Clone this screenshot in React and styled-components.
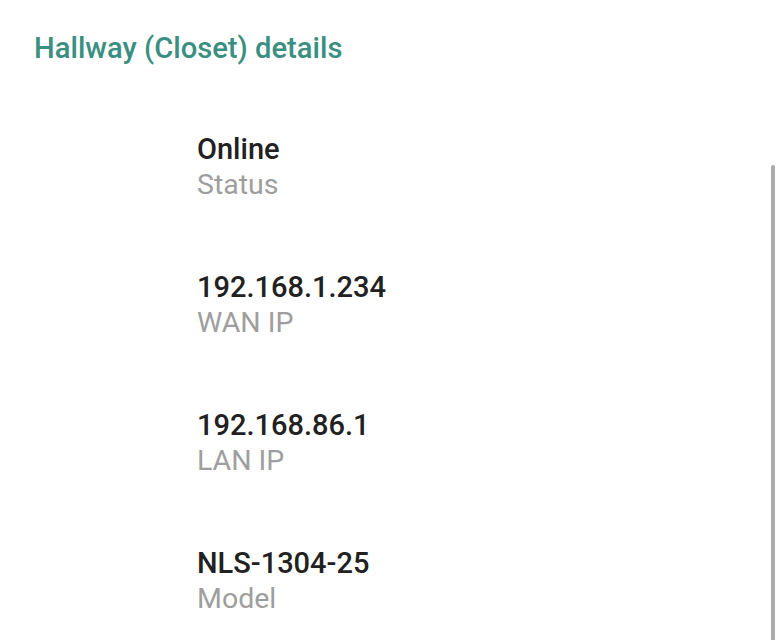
import React from "react"
import styled, { createGlobalStyle } from "styled-components"

const GlobalStyle = createGlobalStyle`
  html, body {
    margin: 0;
    padding: 0;
    background: #ffffff;
    font-family: Roboto, "Noto Sans", sans-serif;
  }
`

const Screen = styled.div`
  position: relative;
  width: 782px;
  height: 640px;
  overflow: hidden;
  background: #ffffff;
`

const Title = styled.h2`
  margin: 0;
  padding: 31px 0 0 34px;
  font-size: 29.2px;
  font-weight: 500;
  line-height: 34px;
  color: #3a8f81;
`

const DetailList = styled.div`
  display: flex;
  flex-direction: column;
  gap: 68px;
  padding: 67px 0 0 197px;
`

const Detail = styled.div`
  display: flex;
  flex-direction: column;
`

const Value = styled.span`
  font-size: 29px;
  font-weight: 500;
  line-height: 35px;
  color: #212121;
`

const Label = styled.span`
  font-size: 28.5px;
  font-weight: 400;
  line-height: 35px;
  color: #9e9e9e;
`

const Scrollbar = styled.div`
  position: absolute;
  right: 7px;
  top: 165px;
  bottom: -10px;
  width: 4px;
  border-radius: 2px;
  background: #aaaaaa;
`

const details = [
  { value: "Online", label: "Status" },
  { value: "192.168.1.234", label: "WAN IP" },
  { value: "192.168.86.1", label: "LAN IP" },
  { value: "NLS-1304-25", label: "Model" },
]

export default function App() {
  return (
    <Screen>
      <GlobalStyle />
      <Title>Hallway (Closet) details</Title>
      <DetailList>
        {details.map(d => (
          <Detail key={d.label}>
            <Value>{d.value}</Value>
            <Label>{d.label}</Label>
          </Detail>
        ))}
      </DetailList>
      <Scrollbar />
    </Screen>
  )
}
